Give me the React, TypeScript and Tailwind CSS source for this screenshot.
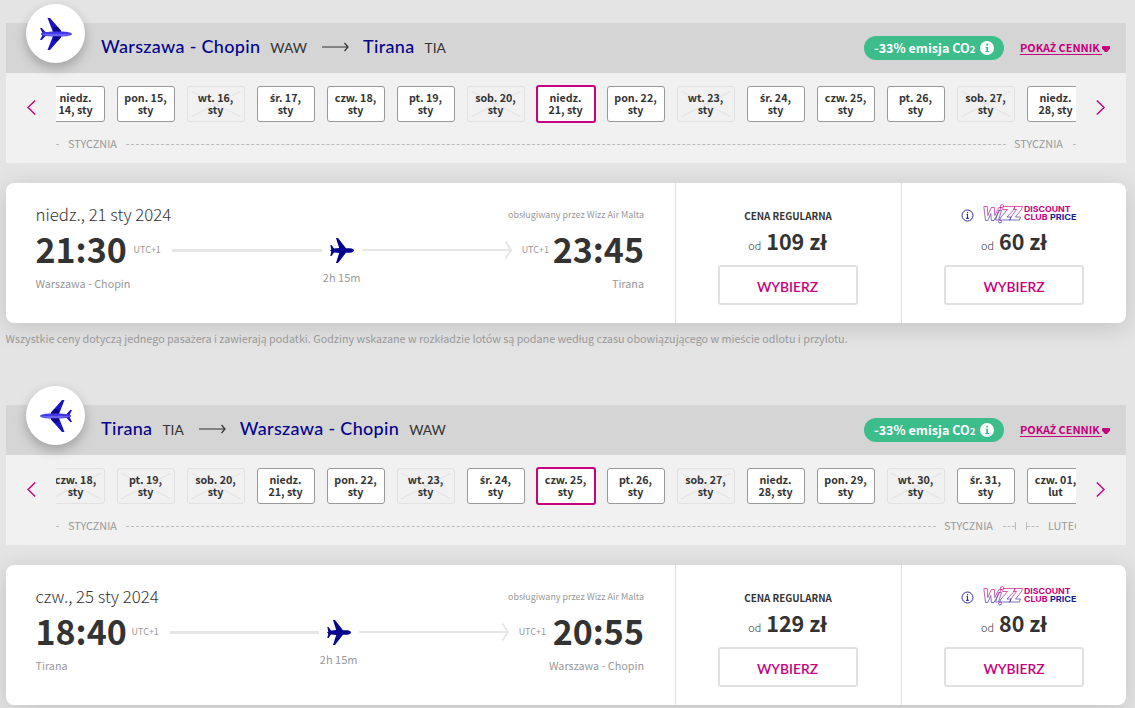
import { Fragment } from "react";

type DayState = "available" | "disabled" | "selected";

interface Day {
  label: string;
  state: DayState;
}

interface Flight {
  from: string;
  fromCode: string;
  to: string;
  toCode: string;
  returning?: boolean;
  days: Day[];
  date: string;
  departure: string;
  departureWidth: string;
  arrival: string;
  arrivalWidth: string;
  price: string;
  clubPrice: string;
  note?: string;
}

function day(first: string, second: string, state: DayState = "available"): Day {
  return { label: `${first}\n${second}`, state };
}

const flights: Flight[] = [
  {
    from: "Warszawa - Chopin",
    fromCode: "WAW",
    to: "Tirana",
    toCode: "TIA",
    days: [
      day("niedz.", "14, sty"),
      day("pon. 15,", "sty"),
      day("wt. 16,", "sty", "disabled"),
      day("śr. 17,", "sty"),
      day("czw. 18,", "sty"),
      day("pt. 19,", "sty"),
      day("sob. 20,", "sty", "disabled"),
      day("niedz.", "21, sty", "selected"),
      day("pon. 22,", "sty"),
      day("wt. 23,", "sty", "disabled"),
      day("śr. 24,", "sty"),
      day("czw. 25,", "sty"),
      day("pt. 26,", "sty"),
      day("sob. 27,", "sty", "disabled"),
      day("niedz.", "28, sty"),
    ],
    date: "niedz., 21 sty 2024",
    departure: "21:30",
    departureWidth: "w-[98px]",
    arrival: "23:45",
    arrivalWidth: "w-[95px]",
    price: "109 zł",
    clubPrice: "60 zł",
    note: "Wszystkie ceny dotyczą jednego pasażera i zawierają podatki. Godziny wskazane w rozkładzie lotów są podane według czasu obowiązującego w mieście odlotu i przylotu.",
  },
  {
    from: "Tirana",
    fromCode: "TIA",
    to: "Warszawa - Chopin",
    toCode: "WAW",
    returning: true,
    days: [
      day("czw. 18,", "sty", "disabled"),
      day("pt. 19,", "sty", "disabled"),
      day("sob. 20,", "sty", "disabled"),
      day("niedz.", "21, sty"),
      day("pon. 22,", "sty"),
      day("wt. 23,", "sty", "disabled"),
      day("śr. 24,", "sty"),
      day("czw. 25,", "sty", "selected"),
      day("pt. 26,", "sty"),
      day("sob. 27,", "sty", "disabled"),
      day("niedz.", "28, sty"),
      day("pon. 29,", "sty"),
      day("wt. 30,", "sty", "disabled"),
      day("śr. 31,", "sty"),
      day("czw. 01,", "lut"),
    ],
    date: "czw., 25 sty 2024",
    departure: "18:40",
    departureWidth: "w-[96px]",
    arrival: "20:55",
    arrivalWidth: "w-[98px]",
    price: "129 zł",
    clubPrice: "80 zł",
  },
];

function Pl({ children }: { children: string }) {
  return (
    <>
      {children.split(/([śćżźŚŻ])/).map((part, i) =>
        i % 2 ? (
          <span key={i} className="font-['Open_Sans',sans-serif] text-[0.97em] leading-none">
            {part}
          </span>
        ) : (
          <Fragment key={i}>{part}</Fragment>
        ),
      )}
    </>
  );
}

function BadgePlane({ flipped }: { flipped?: boolean }) {
  return (
    <svg
      viewBox="0 0 32 32"
      className={flipped ? "size-8 -scale-x-100" : "size-8"}
    >
      <path d="M7.500 0h2.500L20.500 12l.5 2h-8z" fill="#1a12c4" />
      <path d="M7.500 32h2.500L20.500 20l.5-2h-8z" fill="#1a12c4" />
      <path d="M14 9l4 .3 3 3.500.3 1.200h-8.500zM14 23l4-.3 3-3.500.3-1.200h-8.500z" fill="#0b0787" />
      <path d="M0 10h1.800l4.500 5H2.500zM0 22h1.800l4.500-5H2.500z" fill="#1a12c4" />
      <path d="M1 15.500C3 14 8 13.500 20 13.500c6 0 12 .9 12 2.500s-6 2.500-12 2.500C8 18.500 3 18 1 16.500z" fill="#4238e8" />
      <path d="M2 16.200h29c-2 1.200-6 1.600-11 1.600-9 0-15-.3-18-1.600z" fill="#7770f5" />
    </svg>
  );
}

function RoutePlane() {
  return (
    <svg viewBox="0 0 24 25" className="h-[25px] w-6 shrink-0" fill="#06038d">
      <path d="M6 0h2l8 10.300h4c2.500 0 4 1.200 4 2.200s-1.500 2.200-4 2.200h-4L8 25H6l3.200-10.100-5.200-.5L1.500 18H.3l1-4.500L0 12.500l1.300-1L.3 7h1.200L4 10.600l5.200-.5z" />
    </svg>
  );
}

function Chevron({ left }: { left?: boolean }) {
  return (
    <svg viewBox="0 0 9 15" className="h-[15px] w-[9px]" fill="none" stroke="#c6007e" strokeWidth="1.400">
      <path d={left ? "M8.200.5 1 7.500l7.200 7" : "M.8.5 8 7.500l-7.200 7"} />
    </svg>
  );
}

function RouteHeader({ flight }: { flight: Flight }) {
  return (
    <div className="relative flex h-[50px] items-center bg-[#d5d5d5] pl-[95px] pr-4 font-['Lato',sans-serif]">
      <div className="absolute left-5 -top-[19px] flex size-[59px] items-center justify-center rounded-full bg-white shadow-[0_5px_12px_rgba(0,0,0,0.25)]">
        <BadgePlane flipped={flight.returning} />
      </div>
      <div className="flex items-center pb-[3px]">
        <span className="text-[18px] font-medium tracking-[0.32px] text-[#06038d]">{flight.from}</span>
        <span className="ml-[10px] pt-[3px] text-[13.800px] text-[#333]">{flight.fromCode}</span>
        <svg viewBox="0 0 27 10" className="ml-[15px] mt-px h-[10px] w-[27px]" fill="none" stroke="#333" strokeWidth="1.200">
          <path d="M0 5h26M22.500 1l3.500 4-3.500 4" />
        </svg>
        <span className="ml-[14px] text-[18px] font-medium tracking-[0.32px] text-[#06038d]">{flight.to}</span>
        <span className="ml-[10px] pt-[3px] text-[13.800px] text-[#333]">{flight.toCode}</span>
      </div>

      <div className="ml-auto flex items-center font-['Noto_Sans_CJK_SC','Open_Sans',sans-serif] font-bold">
        <div className="flex h-6 w-[140px] items-center rounded-full bg-[#3dbd8c] pl-[10px] text-white">
          <span className="whitespace-nowrap text-[12.600px] leading-6">
            -33% emisja CO<span className="text-[9.500px]">2</span>
          </span>
          <svg viewBox="0 0 14 14" className="ml-[5px] size-[14px] shrink-0">
            <circle cx="7" cy="7" r="7" fill="#fff" />
            <path d="M5.500 5.700h2.500v4.200h1v1H5.300v-1h1V6.700h-.8zM6.200 2.700h1.800v1.700H6.200z" fill="#3dbd8c" />
          </svg>
        </div>
        <a className="ml-4 flex items-center text-[#c6007e]">
          <span className="w-[82px] whitespace-nowrap border-b border-[#c6007e] text-[10.900px] leading-[13px]">
            <Pl>POKAŻ CENNIK</Pl>
          </span>
          <svg viewBox="0 0 8 6" className="mt-0.5 h-1.5 w-2" fill="#c6007e">
            <path d="M.5 0h7L8 1v1.500L5 6H3L0 2.500V1z" />
          </svg>
        </a>
      </div>
    </div>
  );
}

function DayCell({ label, state }: Day) {
  const look = {
    available: "h-9 w-[58px] border border-[#999] bg-white",
    disabled: "h-9 w-[58px] border border-[#e1e1e1]",
    selected: "h-[38px] w-[60px] border-2 border-[#c6007e] bg-white",
  }[state];

  return (
    <div className="flex h-[38px] w-[70px] shrink-0 items-center justify-center">
      <div className={`relative flex shrink-0 items-center justify-center rounded-[3px] pr-px ${look}`}>
        {state === "disabled" && (
          <svg viewBox="0 0 50 26" className="absolute inset-x-[3px] inset-y-1 h-[26px] w-[50px]" stroke="#e1e1e1" strokeWidth="1">
            <path d="M0 0l50 26M50 0L0 26" />
          </svg>
        )}
        <span className="relative whitespace-pre text-center text-[10.700px] font-bold leading-3 text-[#333]">
          <Pl>{label}</Pl>
        </span>
      </div>
    </div>
  );
}

function Dashes({ className }: { className: string }) {
  return <div className={`h-px shrink-0 border-t border-dashed border-[#bbb] ${className}`} />;
}

function Month({ name }: { name: string }) {
  return <span className="shrink-0 pb-[3px]">{name}</span>;
}

function MonthLine({ returning }: { returning?: boolean }) {
  return (
    <div className="mt-[11px] flex h-5 w-[1020px] items-center overflow-hidden whitespace-nowrap text-[10.800px] leading-5 text-[#999]">
      <Dashes className="w-[3px]" />
      <div className="ml-[9px] flex w-[50px] shrink-0">
        <Month name="STYCZNIA" />
      </div>
      <Dashes className={returning ? "ml-2 w-[810px]" : "ml-2 w-[880px]"} />
      <div className="ml-2 flex w-[50px] shrink-0">
        <Month name="STYCZNIA" />
      </div>
      {returning ? (
        <>
          <Dashes className="ml-[9px] w-3" />
          <div className="h-2 w-px shrink-0 bg-[#bbb]" />
          <div className="ml-[10px] h-2 w-px shrink-0 bg-[#bbb]" />
          <Dashes className="mr-[9px] w-3" />
          <Month name="LUTEGO" />
        </>
      ) : (
        <Dashes className="ml-[9px] w-[3px]" />
      )}
    </div>
  );
}

function DateStrip({ flight }: { flight: Flight }) {
  return (
    <div className="flex h-[90px] justify-between bg-[#f1f1f1] pl-5 pr-[21px]">
      <div className="mt-[27px] w-[30px] pl-[0.5px]">
        <Chevron left />
      </div>
      <div className="w-[1020px] shrink-0 pt-3">
        <div className="flex justify-center overflow-hidden">
          {flight.days.map((d) => (
            <DayCell key={d.label} {...d} />
          ))}
        </div>
        <MonthLine returning={flight.returning} />
      </div>
      <div className="mt-[27px] flex w-[29px] justify-end">
        <Chevron />
      </div>
    </div>
  );
}

function ClubLogo() {
  return (
    <svg viewBox="0 0 95 20" className="h-5 w-[95px]">
      <defs>
        <linearGradient id="wizz" x1="0" y1="0" x2="0" y2="1">
          <stop offset="0.15" stopColor="#d0148c" />
          <stop offset="0.9" stopColor="#3b36a8" />
        </linearGradient>
      </defs>
      <g fill="none" stroke="url(#wizz)" strokeWidth="0.7" strokeLinejoin="round">
        <path d="M.8 2.500h3.500l.5 9 3.500-8h3l.5 8 4-8h2.500L11 16.500H8.300l-.5-7-3 7H2.500z" />
        <path d="M15.500 6.500h3l-3 9.500h-3zM17.800 1l2-.5 1 1.500-1.500 1.500h-1.800z" />
        <path d="M20.500 2.500h11.500l-1 3-7 7.500h4l-1 3H16.500l1.500-3 6.500-7.500h-5z" />
        <path d="M32 2.500h7.500l-1 3-6 7.500h5l-1 3H26.500l1.500-3 5.500-7.500h-3z" />
        <circle cx="17" cy="17.500" r="1.500" />
      </g>
      <g className="font-['Inter',sans-serif] text-[8.200px] font-bold">
        <text x="41" y="8" textLength="46.500" lengthAdjust="spacingAndGlyphs" fill="#c6007e">DISCOUNT</text>
        <text x="41" y="15.800" textLength="23.500" lengthAdjust="spacingAndGlyphs" fill="#c6007e">CLUB</text>
        <text x="67" y="15.800" textLength="26.500" lengthAdjust="spacingAndGlyphs" fill="#1d1a96">PRICE</text>
      </g>
    </svg>
  );
}

function PriceBox({ price, club }: { price: string; club?: boolean }) {
  return (
    <div
      className={`flex flex-col items-center border-l border-[#e1e1e1] ${club ? "w-[225px]" : "w-[226px] pr-0.5"}`}
    >
      <div className="mt-[18px] flex h-[25px] items-center">
        {club ? (
          <div className="flex items-start pl-2.5">
            <svg viewBox="0 0 13 13" className="mt-[5px] mr-[9px] size-[13px]" fill="none" stroke="#2d2a9e">
              <circle cx="6.500" cy="6.500" r="5.500" />
              <path d="M5.500 5.500h1v3.700M5.200 9.400h2.600M6.500 3v1.300" strokeWidth="1.100" />
            </svg>
            <ClubLogo />
          </div>
        ) : (
          <span className="pl-px pt-[6px] text-[9.800px] font-bold text-[#333]">CENA REGULARNA</span>
        )}
      </div>
      <div className="mt-0.5 flex h-[25px] items-baseline gap-[5px] leading-[25px] text-[#333]">
        <span className="text-[10.800px] font-light">od</span>
        <span className="text-[21.500px] font-bold">{price}</span>
      </div>
      <button className="mt-3 h-10 w-[140px] rounded-[3px] border-2 border-[#e1e1e1] pt-1 font-['Lato',sans-serif] text-[13.800px] font-semibold text-[#c6007e]">
        WYBIERZ
      </button>
    </div>
  );
}

function FlightCard({ flight }: { flight: Flight }) {
  return (
    <div className="mt-5 flex h-[140px] rounded-lg bg-white shadow-[0_5px_25px_rgba(0,0,0,0.15)]">
      <div className="w-[669px] pl-[29.500px] pr-[31px] pt-5">
        <div className="flex h-6 items-center justify-between">
          <span className="text-[16.800px] font-light text-[#333]">{flight.date}</span>
          <span className="text-[8.950px] text-[#999]">obsługiwany przez Wizz Air Malta</span>
        </div>
        <div className="flex h-[46px] items-center">
          <span className={`shrink-0 whitespace-nowrap pb-1 text-[34px] font-bold text-[#333] ${flight.departureWidth}`}>
            {flight.departure}
          </span>
          <span className="w-[38.500px] shrink-0 text-[9px] text-[#999]">UTC+1</span>
          <div className="h-[3px] flex-1 bg-[#e6e6e6]" />
          <div className="relative mx-2 flex w-6 justify-center">
            <RoutePlane />
            <span className="absolute top-[31px] whitespace-nowrap text-[11px] leading-4 text-[#999]">2h 15m</span>
          </div>
          <svg viewBox="0 0 150 20" className="h-5 w-[150px] shrink-0" fill="none" stroke="#e6e6e6" strokeWidth="2">
            <path d="M0 10h149M143.500 1.500l5.500 8.500-5.500 8.500" />
          </svg>
          <span className="ml-[10px] shrink-0 text-[9px] text-[#999]">UTC+1</span>
          <span className={`flex shrink-0 justify-end whitespace-nowrap pb-1 text-[34px] font-bold text-[#333] ${flight.arrivalWidth}`}>
            {flight.arrival}
          </span>
        </div>
        <div className="flex justify-between pt-px text-[10.800px] leading-[18px] text-[#999]">
          <span>{flight.from}</span>
          <span>{flight.to}</span>
        </div>
      </div>
      <PriceBox price={flight.price} />
      <PriceBox price={flight.clubPrice} club />
    </div>
  );
}

export default function App() {
  return (
    <main className="h-[708px] w-[1135px] overflow-hidden bg-[#e4e4e4] pl-[6px] pr-[9px] pt-[23px] font-['Noto_Sans_CJK_SC','Open_Sans',sans-serif]">
      {flights.map((flight) => (
        <section key={flight.date} className="h-[382px]">
          <RouteHeader flight={flight} />
          <DateStrip flight={flight} />
          <FlightCard flight={flight} />
          {flight.note && (
            <p className="-ml-[0.5px] mt-2 whitespace-nowrap text-[10.770px] leading-4 text-[#999]">
              <Pl>{flight.note}</Pl>
            </p>
          )}
        </section>
      ))}
    </main>
  );
}
